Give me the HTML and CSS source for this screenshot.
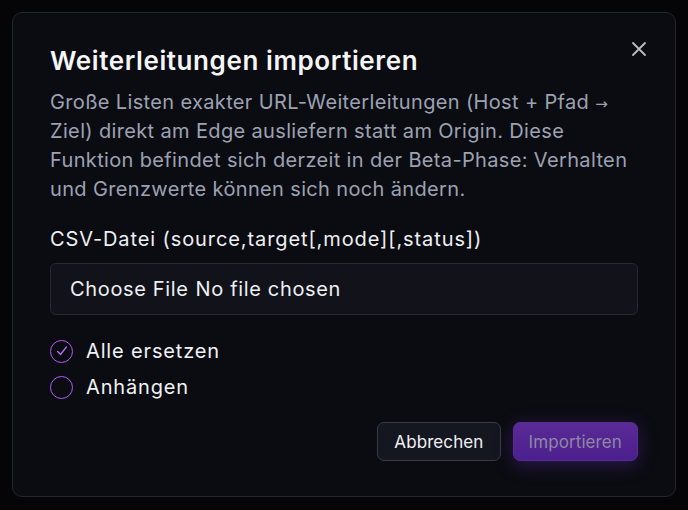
FILE: index.html
```html
<!DOCTYPE html>
<html lang="de">
<head>
  <meta charset="UTF-8">
  <title>Weiterleitungen importieren</title>
  <link rel="stylesheet" href="styles.css">
</head>
<body>
  <!-- Import-Dialog -->
  <div class="modal">
    <button class="close" aria-label="Schließen">
      <svg width="16" height="16" viewBox="0 0 16 16"><path d="M2 2L14 14M14 2L2 14" stroke="#b9bcc6" stroke-width="1.8" stroke-linecap="round"/></svg>
    </button>

    <h1>Weiterleitungen importieren</h1>
    <p class="desc">Große Listen exakter URL-Weiterleitungen (Host + Pfad <span class="arrow">→</span> Ziel) direkt am Edge ausliefern statt am Origin. Diese Funktion befindet sich derzeit in der Beta-Phase: Verhalten und Grenzwerte können sich noch ändern.</p>

    <label class="field-label">CSV-Datei (source,target[,mode][,status])</label>
    <div class="file-box">
      <span class="file-btn">Choose File</span> No file chosen
    </div>

    <div class="options">
      <div class="option">
        <span class="radio checked">
          <svg width="14" height="14" viewBox="0 0 14 14"><path d="M2.6 7.4L5.6 10.4L11.4 3" fill="none" stroke="#b86cf5" stroke-width="1.4" stroke-linecap="round" stroke-linejoin="round"/></svg>
        </span>
        Alle ersetzen
      </div>
      <div class="option">
        <span class="radio"></span>
        Anhängen
      </div>
    </div>

    <div class="actions">
      <button class="btn btn-cancel">Abbrechen</button>
      <button class="btn btn-primary" disabled>Importieren</button>
    </div>
  </div>
</body>
</html>
```

FILE: styles.css
```css
body {
  margin: 0;
  background-color: #050507;
  font-family: 'Inter', 'Noto Sans', sans-serif;
  color: #f1f2f5;
  height: 510px;
  overflow: hidden;
}
.modal {
  position: relative;
  margin: 12px;
  height: 485px;
  box-sizing: border-box;
  background-color: #0b0c11;
  border: 1px solid #25272e;
  border-radius: 10px;
  padding: 30px 37px 0 37px;
}
.close {
  position: absolute;
  top: 28px;
  right: 28px;
  background: none;
  border: none;
  padding: 0;
  width: 16px;
  height: 16px;
  cursor: pointer;
}
h1 {
  margin: 0;
  font-size: 26px;
  font-weight: 600;
  line-height: 36px;
  color: #f4f5f7;
  letter-spacing: 0.6px;
}
.desc {
  margin: 9px 0 0 0;
  font-size: 20px;
  line-height: 29px;
  color: #9da2b3;
  letter-spacing: 0.35px;
}
.desc .arrow {
  font-family: 'DejaVu Sans', sans-serif;
  font-size: 15px;
  line-height: 1;
  letter-spacing: 0;
}
.field-label {
  display: block;
  margin-top: 21px;
  font-size: 20px;
  line-height: 28px;
  color: #eef0f3;
  letter-spacing: 0.9px;
}
.file-box {
  margin-top: 10px;
  height: 52px;
  box-sizing: border-box;
  background-color: #12131a;
  border: 1px solid #272930;
  border-radius: 6px;
  padding: 0 19px;
  display: flex;
  align-items: center;
  gap: 7px;
  font-size: 20px;
  color: #eef0f3;
  letter-spacing: 0.65px;
}
.options {
  margin-top: 24px;
  display: flex;
  flex-direction: column;
  gap: 12px;
}
.option {
  display: flex;
  align-items: center;
  gap: 13px;
  font-size: 20px;
  line-height: 24px;
  color: #f1f2f5;
  letter-spacing: 0.85px;
}
.radio {
  width: 23px;
  height: 23px;
  box-sizing: border-box;
  border: 1.6px solid #b05cf8;
  border-radius: 50%;
  display: flex;
  align-items: center;
  justify-content: center;
}
.actions {
  margin-top: 23px;
  display: flex;
  justify-content: flex-end;
  gap: 12px;
}
.btn {
  height: 39px;
  border-radius: 7px;
  font-family: 'Inter', 'Noto Sans', sans-serif;
  font-size: 17px;
  padding: 0 15px;
  letter-spacing: 0.1px;
}
.btn-cancel {
  background-color: #141620;
  border: 1px solid #3a3c45;
  color: #f1f2f5;
  padding: 0 16px;
}
.btn-primary {
  background: linear-gradient(#5a2b96, #4b1f8e);
  border: 1px solid #5a2d94;
  color: #8f88a3;
  box-shadow: 0 4px 18px rgba(110, 50, 200, 0.35);
}
```
